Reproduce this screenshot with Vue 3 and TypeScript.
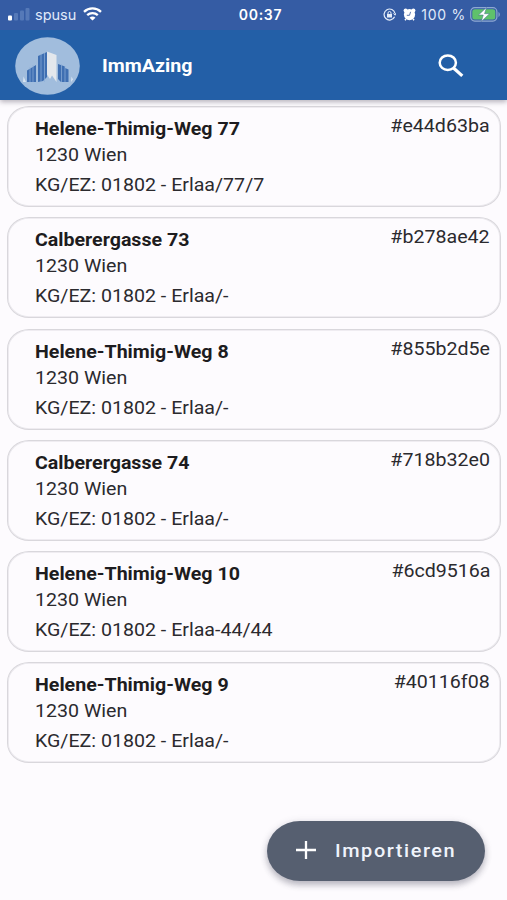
<script setup lang="ts">
interface Property {
  street: string
  city: string
  register: string
  id: string
}

const properties: Property[] = [
  { street: 'Helene-Thimig-Weg 77', city: '1230 Wien', register: '01802 - Erlaa/77/7', id: 'e44d63ba' },
  { street: 'Calberergasse 73', city: '1230 Wien', register: '01802 - Erlaa/-', id: 'b278ae42' },
  { street: 'Helene-Thimig-Weg 8', city: '1230 Wien', register: '01802 - Erlaa/-', id: '855b2d5e' },
  { street: 'Calberergasse 74', city: '1230 Wien', register: '01802 - Erlaa/-', id: '718b32e0' },
  { street: 'Helene-Thimig-Weg 10', city: '1230 Wien', register: '01802 - Erlaa-44/44', id: '6cd9516a' },
  { street: 'Helene-Thimig-Weg 9', city: '1230 Wien', register: '01802 - Erlaa/-', id: '40116f08' },
]
</script>

<template>
  <div class="screen">
    <header class="header">
      <div class="status">
        <div class="status-left">
          <svg class="signal" width="22" height="14" viewBox="0 0 22 14">
            <rect x="0" y="8.5" width="4" height="5" rx="1" fill="#fff" />
            <rect x="6" y="6" width="4" height="7.5" rx="1" fill="#5579b8" />
            <rect x="12" y="3.5" width="4" height="10" rx="1" fill="#5579b8" />
            <rect x="17.5" y="1" width="4" height="12.5" rx="1" fill="#5579b8" />
          </svg>
          <span class="carrier">spusu</span>
          <svg class="wifi" width="19" height="14" viewBox="0 0 19 14" fill="none" stroke="#fff" stroke-width="2.3">
            <path d="M1 4.8C5.8.3 13.2.3 18 4.8" />
            <path d="M4.2 8.2C7.2 5.4 11.8 5.4 14.8 8.2" />
            <path d="M9.5 13.5 6.5 10.7C8.2 9.2 10.8 9.2 12.5 10.7Z" fill="#fff" stroke="none" />
          </svg>
        </div>
        <span class="clock">00:37</span>
        <div class="status-right">
          <svg width="13" height="13" viewBox="0 0 13 13" fill="none" stroke="#e4edfa">
            <path d="M11.6 8.8A5.5 5.5 0 1 1 12 5.5" stroke-width="1.2" />
            <path d="m10.3 5.4 1.8 1.8L13 4.900" stroke-width="1" />
            <rect x="4" y="6" width="5" height="3.5" fill="#e4edfa" stroke="none" />
            <path d="M5 6.2V5a1.5 1.5 0 0 1 3 0v1.200" stroke-width="1" />
          </svg>
          <svg class="alarm" width="13" height="13" viewBox="0 0 13 13">
            <circle cx="2.6" cy="2.6" r="2" fill="#fff" />
            <circle cx="10.4" cy="2.6" r="2" fill="#fff" />
            <circle cx="6.5" cy="6.6" r="5.6" fill="#fff" />
            <path d="m3 11-1 1.2M10 11l1 1.2" stroke="#fff" stroke-width="1.6" />
            <path d="M7.6 3.8 6.5 7.3H3.8" fill="none" stroke="#5876ae" stroke-width="1" />
          </svg>
          <span class="percent">100 %</span>
          <svg class="battery" width="31" height="15" viewBox="0 0 31 15">
            <rect x=".7" y=".7" width="26.2" height="13.4" rx="4" fill="none" stroke="#8fa8d2" stroke-width="1.2" />
            <rect x="2.3" y="2.3" width="23" height="10.2" rx="2.5" fill="#5fc16b" />
            <path d="M28.5 5c1.7.7 1.7 4.3 0 5z" fill="#8fa8d2" />
            <path d="M16.5.5 8.5 8h4.800L11.3 14.5 19.5 6.700h-5z" fill="#fff" stroke="#456e96" stroke-width=".5" />
          </svg>
        </div>
      </div>

      <div class="toolbar">
        <svg class="logo" width="65" height="58" viewBox="0 0 65 58">
          <ellipse cx="32.5" cy="29" rx="32.3" ry="28.8" fill="#a1bddd" />
          <g fill="#3f6fb2">
            <path d="M12 33.5 21 28v17h-9zM23 19l9-4v25l-4 4-5 1zM43 27l7 2.5V45h-4l-3-3zM50 31l3.5 1.5V45H50z" />
          </g>
          <g stroke="#8eb0d8" stroke-width=".7">
            <path d="M15 30v15M18 28v17M26 17v28M29.5 16v29M46.5 27v18M50 29v16" />
          </g>
          <path d="M32 14.5 41.5 18V45L37 38.5 35 42l-3-4.5z" fill="#e3e7ec" />
          <path d="m8.5 39.5 2.5 5.5H8zM56.5 39.5l1.5 3-2 2.5z" fill="#d9e5f2" />
        </svg>
        <h1 class="title">ImmAzing</h1>
        <svg class="search" width="26" height="24" viewBox="0 0 26 24" fill="none" stroke="#fff">
          <ellipse cx="9.8" cy="8.7" rx="8.1" ry="7.3" stroke-width="2.5" />
          <path d="m15.5 14 8.8 7.9" stroke-width="3.2" />
        </svg>
      </div>
    </header>

    <main class="list">
      <article v-for="property in properties" :key="property.id" class="card">
        <div class="details">
          <h2 class="street">{{ property.street }}</h2>
          <p class="city">{{ property.city }}</p>
          <p class="register">KG/EZ: {{ property.register }}</p>
        </div>
        <span class="id">#{{ property.id }}</span>
      </article>
    </main>

    <button class="import" type="button">
      <svg width="20" height="18" viewBox="0 0 20 18" stroke="#fff" stroke-width="2.3">
        <path d="M0 9h20M10 0v18" />
      </svg>
      <span class="import-label">Importieren</span>
    </button>
  </div>
</template>

<style>
body {
  background: #fdfbfe;
}
</style>

<style scoped>
.screen {
  box-sizing: border-box;
  display: flex;
  flex-direction: column;
  height: 900px;
  overflow: hidden;
  background: #fdfbfe;
  color: #1d1c20;
  font-family: Roboto, "Liberation Sans", sans-serif;
}

.header {
  z-index: 1;
  flex: none;
  height: 100px;
  background: #235fa7;
  box-shadow: 0 2px 5px rgba(50, 40, 60, 0.35);
  color: #fff;
}

.status {
  display: grid;
  grid-template-columns: 1fr auto 1fr;
  align-items: center;
  box-sizing: border-box;
  height: 30px;
  padding: 0 6px 2px 8px;
  background: #355ca4;
  font-family: Inter, sans-serif;
  font-size: 14px;
}

.status-left,
.status-right {
  display: flex;
  align-items: center;
}

.status-right {
  justify-content: flex-end;
}

.carrier {
  width: 42px;
  margin-left: 5px;
  color: #e0eafa;
  font-size: 14.5px;
}

.wifi {
  margin-left: 6px;
}

.clock {
  padding-left: 12px;
  font-size: 14px;
  font-weight: 600;
  letter-spacing: 0.7px;
}

.alarm {
  margin-left: 7px;
}

.percent {
  margin: 0 4px 0 5px;
  color: #e0eafa;
  font-size: 14px;
  letter-spacing: 0.75px;
  white-space: nowrap;
}

.toolbar {
  display: flex;
  align-items: center;
  height: 71px;
  padding: 0 43px 0 15px;
}

.title {
  margin: 1px auto 0 22px;
  font-size: 18px;
  font-weight: 700;
  line-height: 24px;
  transform: scaleX(1.09);
  transform-origin: left;
}

.list {
  display: grid;
  grid-auto-rows: 101px;
  gap: 10.2px;
  padding: 6.2px 6px 0 7px;
}

.card {
  display: flex;
  justify-content: space-between;
  box-sizing: border-box;
  padding: 9px 10px 0 27px;
  border: 1px solid #d9d7dc;
  border-radius: 22px / 20px;
  box-shadow: inset 0 0 0 0.8px #eae8ed;
}

.street,
.city,
.register,
.id {
  margin: 0;
  font-size: 17.5px;
  font-weight: 400;
  line-height: 26px;
  white-space: nowrap;
  transform: scaleX(1.12);
  transform-origin: left;
}

.street {
  font-weight: 700;
}

.city,
.register,
.id {
  color: #2b2a2e;
}

.register {
  margin-top: 4px;
}

.id {
  margin-top: -3px;
  transform-origin: right;
}

.import {
  display: flex;
  flex: none;
  align-items: center;
  align-self: flex-end;
  box-sizing: border-box;
  width: 218px;
  height: 60px;
  margin: auto 22px 19.5px 0;
  padding: 0 0 1px 29px;
  border: 0;
  border-radius: 33px / 30px;
  background: #565f70;
  box-shadow: 0 4px 6px rgba(60, 60, 80, 0.3), 0 1px 8px rgba(60, 60, 80, 0.12);
  color: #f0f4fc;
  font-family: inherit;
}

.import-label {
  margin-left: 19px;
  font-size: 17.8px;
  font-weight: 500;
  letter-spacing: 1.4px;
  transform: scaleX(1.12);
  transform-origin: left;
}
</style>
